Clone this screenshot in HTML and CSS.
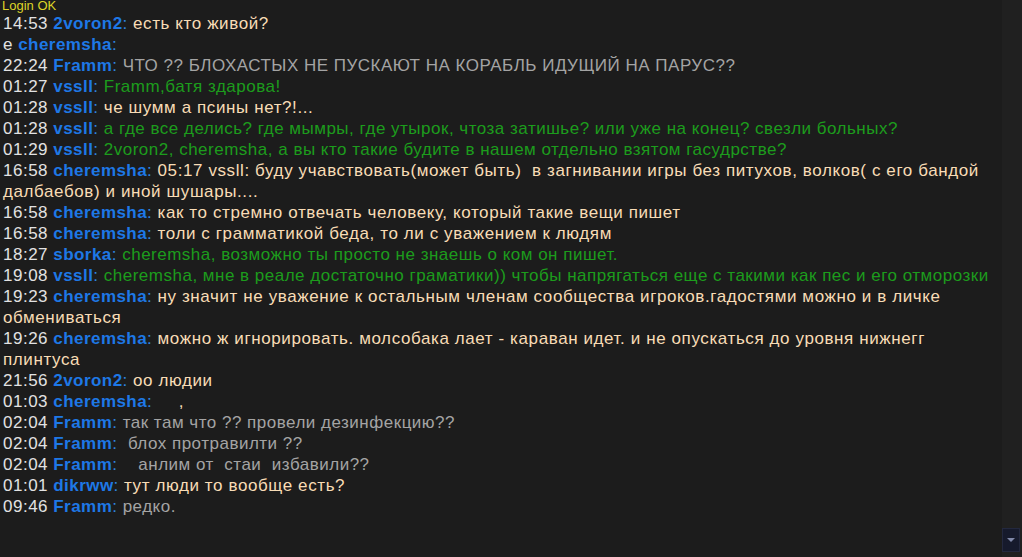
FILE: index.html
```html
<!DOCTYPE html>
<html>
<head>
<meta charset="utf-8">
<link rel="stylesheet" href="styles.css">
</head>
<body>
<div class="app">
  <div class="chat">
    <div class="status">Login OK</div>
    <div class="line"><span class="t">14:53 </span><span class="n">2voron2</span><span class="c">: </span><span class="m beige">есть кто живой?</span></div>
    <div class="line"><span class="t">е </span><span class="n">cheremsha</span><span class="c">:</span></div>
    <div class="line"><span class="t">22:24 </span><span class="n">Framm</span><span class="c">: </span><span class="m grey">ЧТО ?? БЛОХАСТЫХ НЕ ПУСКАЮТ НА КОРАБЛЬ ИДУЩИЙ НА ПАРУС??</span></div>
    <div class="line"><span class="t">01:27 </span><span class="n">vssll</span><span class="c">: </span><span class="m green">Framm,батя здарова!</span></div>
    <div class="line"><span class="t">01:28 </span><span class="n">vssll</span><span class="c">: </span><span class="m beige">че шумм а псины нет?!...</span></div>
    <div class="line"><span class="t">01:28 </span><span class="n">vssll</span><span class="c">: </span><span class="m green">а где все делись? где мымры, где утырок, чтоза затишье? или уже на конец? свезли больных?</span></div>
    <div class="line"><span class="t">01:29 </span><span class="n">vssll</span><span class="c">: </span><span class="m green">2voron2, cheremsha, а вы кто такие будите в нашем отдельно взятом гасудрстве?</span></div>
    <div class="line"><span class="t">16:58 </span><span class="n">cheremsha</span><span class="c">: </span><span class="m beige">05:17 vssll: буду учавствовать(может быть)&nbsp; в загнивании игры без питухов, волков( с его бандой далбаебов) и иной шушары....</span></div>
    <div class="line"><span class="t">16:58 </span><span class="n">cheremsha</span><span class="c">: </span><span class="m beige">как то стремно отвечать человеку, который такие вещи пишет</span></div>
    <div class="line"><span class="t">16:58 </span><span class="n">cheremsha</span><span class="c">: </span><span class="m beige">толи с грамматикой беда, то ли с уважением к людям</span></div>
    <div class="line"><span class="t">18:27 </span><span class="n">sborka</span><span class="c">: </span><span class="m green">cheremsha, возможно ты просто не знаешь о ком он пишет.</span></div>
    <div class="line"><span class="t">19:08 </span><span class="n">vssll</span><span class="c">: </span><span class="m green">cheremsha, мне в реале достаточно граматики)) чтобы напрягаться еще с такими как пес и его отморозки</span></div>
    <div class="line"><span class="t">19:23 </span><span class="n">cheremsha</span><span class="c">: </span><span class="m beige">ну значит не уважение к остальным членам сообщества игроков.гадостями можно и в личке обмениваться</span></div>
    <div class="line"><span class="t">19:26 </span><span class="n">cheremsha</span><span class="c">: </span><span class="m beige">можно ж игнорировать. молсобака лает - караван идет. и не опускаться до уровня нижнегг плинтуса</span></div>
    <div class="line"><span class="t">21:56 </span><span class="n">2voron2</span><span class="c">: </span><span class="m beige">оо людии</span></div>
    <div class="line"><span class="t">01:03 </span><span class="n">cheremsha</span><span class="c">: </span><span class="m beige pre">    ,</span></div>
    <div class="line"><span class="t">02:04 </span><span class="n">Framm</span><span class="c">: </span><span class="m grey">так там что ?? провели дезинфекцию??</span></div>
    <div class="line"><span class="t">02:04 </span><span class="n">Framm</span><span class="c">: </span><span class="m grey pre"> блох протравилти ??</span></div>
    <div class="line"><span class="t">02:04 </span><span class="n">Framm</span><span class="c">: </span><span class="m grey pre">   анлим от  стаи  избавили??</span></div>
    <div class="line"><span class="t">01:01 </span><span class="n">dikrww</span><span class="c">: </span><span class="m beige">тут люди то вообще есть?</span></div>
    <div class="line"><span class="t">09:46 </span><span class="n">Framm</span><span class="c">: </span><span class="m grey">редко.</span></div>
  </div>
  <div class="scrollbar">
    <div class="track"></div>
    <div class="btn">
      <svg width="10" height="6" viewBox="0 0 10 6"><path d="M1 1 L5 5 L9 1 Z" fill="#8088a8"/></svg>
    </div>
  </div>
</div>
</body>
</html>
```

FILE: styles.css
```css
html, body {
  margin: 0;
  padding: 0;
  background: #1c1c1c;
  height: 100%;
  overflow: hidden;
}

.app {
  display: flex;
  height: 557px;
  width: 1022px;
}

.chat {
  flex: 1;
  padding: 0 2px 0 3px;
  font-family: "Liberation Sans", Arial, sans-serif;
  font-size: 17px;
  letter-spacing: 0.5px;
  line-height: 21px;
  color: #dcdcdc;
}

.status {
  font-size: 13px;
  letter-spacing: 0;
  line-height: 11px;
  color: #dcd428;
  height: 13px;
  margin-left: -1px;
}

.t { color: #e2e2e2; }
.n { color: #1e78e6; font-weight: bold; letter-spacing: 0.45px; }
.c { color: #2f86e0; }
.m.beige { color: #f8dcb6; letter-spacing: 0.6px; }
.m.grey { color: #a4a4a4; }
.m.green { color: #1c9c1c; }
.pre { white-space: pre; }

.scrollbar {
  width: 18px;
  display: flex;
  flex-direction: column;
  background: #202020;
  padding-right: 2px;
}

.track {
  flex: 1;
}

.btn {
  height: 22px;
  margin-bottom: 5px;
  background: #161a2c;
  border: 1px solid #23283e;
  display: flex;
  align-items: center;
  justify-content: center;
}
```
